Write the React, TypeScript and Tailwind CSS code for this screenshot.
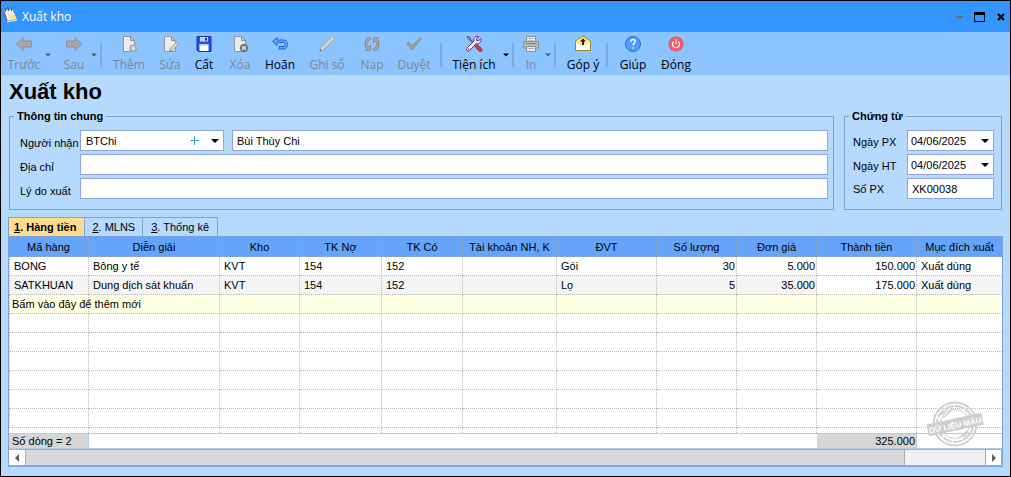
import type { ReactNode } from "react";

/* ---------- icons ---------- */

const Icon = ({ children }: { children: ReactNode }) => (
  <svg width="18" height="18" viewBox="0 0 18 18" fill="none" aria-hidden="true" className="shrink-0">
    {children}
  </svg>
);

const Caret = () => (
  <svg width="8" height="4" viewBox="0 0 8 4" aria-hidden="true" className="shrink-0">
    <path d="M0 0h8L4 4z" fill="#000" />
  </svg>
);

const SmallCaret = () => (
  <svg width="6" height="4" viewBox="0 0 6 4" aria-hidden="true">
    <path d="M0 0.5h6L3 3.5z" fill="currentColor" />
  </svg>
);

const BackIcon = () => (
  <Icon>
    <path d="M1.5 9 8 2.5V6h8.5v6H8v3.5z" fill="#a8a8a8" stroke="#8e8e8e" />
  </Icon>
);

const ForwardIcon = () => (
  <Icon>
    <path d="M16.5 9 10 2.5V6H1.5v6H10v3.5z" fill="#a8a8a8" stroke="#8e8e8e" />
  </Icon>
);

const Sheet = () => (
  <>
    <path d="M3.5 1.5h7l4 4v11h-11z" fill="#ececec" stroke="#8f9499" />
    <path d="M10.5 1.5v4h4z" fill="#c2c6ca" stroke="#8f9499" />
  </>
);

const AddIcon = () => (
  <Icon>
    <Sheet />
    <circle cx="13.2" cy="13.2" r="3" fill="#d9d9d9" stroke="#a6a6a6" strokeWidth="1.6" />
  </Icon>
);

const EditIcon = () => (
  <Icon>
    <Sheet />
    <path d="m8.5 16.5.8-3 6-6.2 2 2-6 6.2z" fill="#d4d4d4" stroke="#959595" strokeWidth=".9" />
    <path d="m8.5 16.5.4-1.8 1.4 1.4z" fill="#777" />
  </Icon>
);

const DeleteIcon = () => (
  <Icon>
    <Sheet />
    <circle cx="13" cy="13" r="4.3" fill="#757575" />
    <path d="m11.2 11.2 3.6 3.6m0-3.6-3.6 3.6" stroke="#e6e6e6" strokeWidth="1.3" />
  </Icon>
);

const SaveIcon = () => (
  <Icon>
    <path d="M2 1.5h14v15H3.5L2 15z" fill="#2450e6" stroke="#1a2fb5" />
    <path d="M5 2h8v4.5H5z" fill="#c9d6f5" />
    <path d="M10 2.8h2v2.7h-2z" fill="#1a2fb5" />
    <path d="M4.5 9.5h9V16h-9z" fill="#fff" />
    <path d="M4.5 9.5h9V11h-9z" fill="#dbe3f4" />
  </Icon>
);

const UndoIcon = () => (
  <Icon>
    <path
      d="M1.5 6.5 6 2.5V5h6.500c2.600 0 4 1.800 4 4.500s-1.600 4.500-4 4.500H8v-2.500h4c1.400 0 2-.8 2-2s-.6-2-2-2H6V10.500z"
      fill="#5aa5fb"
      stroke="#1b66d9"
    />
  </Icon>
);

const PencilIcon = () => (
  <Icon>
    <path d="m1.500 16.500 1.300-4L13.500 2.200c.8-.7 1.800-.6 2.400 0 .6.700.6 1.600 0 2.300L5.200 15z" fill="#d6d6d6" stroke="#a2a2a2" />
    <path d="m1.500 16.500.8-2.600 1.900 1.700z" fill="#777" />
  </Icon>
);

const ReloadIcon = () => (
  <Icon>
    <path d="M7.600 3C3.200 4 1.800 9.500 5 13.200" stroke="#858585" strokeWidth="3.200" />
    <path d="M10.400 15c4.400-1 5.800-6.500 2.600-10.200" stroke="#858585" strokeWidth="3.200" />
    <path d="M2.300 15.500h5.200V10z" fill="#a6a6a6" stroke="#858585" strokeWidth=".8" />
    <path d="M15.700 2.500h-5.200V8z" fill="#a6a6a6" stroke="#858585" strokeWidth=".8" />
    <path d="M7.200 3.200C3.400 4.300 2.200 9.500 5.400 13.200" stroke="#a9a9a9" strokeWidth="1.600" />
    <path d="M10.800 14.800c3.800-1.100 5-6.300 1.800-10" stroke="#a9a9a9" strokeWidth="1.600" />
  </Icon>
);

const CheckIcon = () => (
  <Icon>
    <path d="m1.500 8.500 2-1.500 3.500 3.500L15.500 2.500l1 1L7.500 15z" fill="#9c9c9c" stroke="#8c8c8c" strokeWidth=".8" />
  </Icon>
);

const ToolsIcon = () => (
  <Icon>
    <path d="m2 1.500 3 1.500.6 2.200L11 10.600" stroke="#3f5fae" strokeWidth="1.500" />
    <path d="M2.200 1.800 4.800 3.200 5.400 5 3.200 4.600z" fill="#cfe0ff" stroke="#3f5fae" strokeWidth=".8" />
    <path d="m10 11.300 1.900-1.900 4.400 4c1 1.100.9 2 .2 2.700s-1.700.8-2.700-.2z" fill="#e2383c" stroke="#9c1c2c" strokeWidth=".9" />
    <path
      d="M15.800 3.600 13.400 6l-1.700-.4-.4-1.700 2.400-2.400c-2.300-.7-4.700.5-4.900 3 0 .6 0 1 .2 1.500L2.100 13c-1.600 1.700.6 4.200 2.500 2.500l6.800-7c2.800.9 5.700-1.600 4.400-4.900z"
      fill="#f1ecfa"
      stroke="#6b2c83"
    />
    <circle cx="3.700" cy="14" r=".8" fill="#6b2c83" />
  </Icon>
);

const PrintIcon = () => (
  <Icon>
    <path d="M4.500 6.500v-5h9v5" fill="#ebebeb" stroke="#8d8d8d" />
    <path d="M6 3.500h6M6 5.500h6" stroke="#bcbcbc" />
    <path d="M1.500 6.500h15v6.500h-15z" fill="#b9b9b9" stroke="#8d8d8d" />
    <path d="M3.500 8.500h11" stroke="#838383" />
    <path d="M4.500 11.500h9v5h-9z" fill="#ebebeb" stroke="#8d8d8d" />
    <path d="M6 13.500h6" stroke="#aaa" />
  </Icon>
);

const MailIcon = () => (
  <Icon>
    <path d="M1.500 6 9 1l7.500 5v9.500h-15z" fill="#ffe98a" stroke="#a1842f" />
    <path d="M2 7.500 6.500 10h5L16 7.500V15H2z" fill="#fffef2" />
    <path d="M9 3.200 12 6.500h-2V10H8V6.500H6z" fill="#222" />
  </Icon>
);

const HelpIcon = () => (
  <Icon>
    <circle cx="9" cy="9" r="7.500" fill="#4e9bff" stroke="#2b6fd8" />
    <path d="M6.700 6.900C6.700 5.300 7.700 4.500 9 4.500s2.300.8 2.300 2.100C11.300 8.300 9 8.400 9 10.600M9 12.200v1.500" stroke="#fff" strokeWidth="1.300" />
  </Icon>
);

const PowerIcon = () => (
  <Icon>
    <circle cx="9" cy="9" r="7" fill="#fb5c62" stroke="#d95361" />
    <path d="M6.600 6.600a3.500 3.500 0 1 0 4.800 0M9 4.600v4.400" stroke="#fff" strokeWidth="1.200" />
  </Icon>
);

const AppIcon = () => (
  <svg width="16" height="16" viewBox="0 0 16 16" aria-hidden="true" className="shrink-0">
    <path d="M1 3 10.500 2l4.500 10.500L4.500 15z" fill="#8d86a8" />
    <path d="M2.500 3.500 10.500 2.500l4 9.500L5.500 13.500z" fill="#f4f1f6" />
    <path d="M6.500 7.500 12.500 7l2 5-6.500 1.200z" fill="#f8df8c" />
    <path d="m1.500 3.500 4 10-1.500.7L.8 4.500z" fill="#5d6ba8" />
    <path d="M3.500 1v3.500M6.500.7v3.500M9.500.5v3.500" stroke="#5a4f78" strokeWidth="1" />
    <path d="m4.500 14.300 10.800-1.900.3 1.200L5.500 15.600z" fill="#bfe5ff" />
  </svg>
);

/* ---------- toolbar ---------- */

const ToolButton = ({ label, width, disabled, children }: { label: string; width: string; disabled?: boolean; children: ReactNode }) => (
  <button
    type="button"
    disabled={disabled}
    className={`${width} flex shrink-0 flex-col items-center gap-0.5 whitespace-nowrap text-xs leading-5 ${disabled ? "text-[#7b8795]" : "text-black"}`}
  >
    {children}
    <span>{label}</span>
  </button>
);

const ToolArrow = ({ label, disabled }: { label: string; disabled?: boolean }) => (
  <button
    type="button"
    aria-label={label}
    disabled={disabled}
    className={`flex w-[10px] shrink-0 items-center justify-center ${disabled ? "text-[#4d5a6b]" : "text-black"}`}
  >
    <SmallCaret />
  </button>
);

const Separator = () => <span className="mr-[5px] ml-px h-6 w-[2px] shrink-0 self-center bg-[#78a9e6]" />;

const Toolbar = () => (
  <div role="toolbar" className="flex h-[43px] bg-[#8bc4ff] pt-[3px] pl-1">
    <ToolButton label="Trước" width="w-[38px]" disabled><BackIcon /></ToolButton>
    <ToolArrow label="Danh sách trước" disabled />
    <span className="w-1.5 shrink-0" />
    <ToolButton label="Sau" width="w-[30px]" disabled><ForwardIcon /></ToolButton>
    <ToolArrow label="Danh sách sau" disabled />
    <Separator />
    <ToolButton label="Thêm" width="w-[44px]" disabled><AddIcon /></ToolButton>
    <ToolButton label="Sửa" width="w-[38px]" disabled><EditIcon /></ToolButton>
    <ToolButton label="Cất" width="w-[30px]"><SaveIcon /></ToolButton>
    <ToolButton label="Xóa" width="w-[42px]" disabled><DeleteIcon /></ToolButton>
    <ToolButton label="Hoãn" width="w-[38px]"><UndoIcon /></ToolButton>
    <ToolButton label="Ghi sổ" width="w-[56px]" disabled><PencilIcon /></ToolButton>
    <ToolButton label="Nạp" width="w-[34px]" disabled><ReloadIcon /></ToolButton>
    <ToolButton label="Duyệt" width="w-[50px]" disabled><CheckIcon /></ToolButton>
    <Separator />
    <ToolButton label="Tiện ích" width="w-[54px]"><ToolsIcon /></ToolButton>
    <ToolArrow label="Mở tiện ích" />
    <Separator />
    <ToolButton label="In" width="w-[24px]" disabled><PrintIcon /></ToolButton>
    <ToolArrow label="Chọn mẫu in" disabled />
    <Separator />
    <ToolButton label="Góp ý" width="w-[44px]"><MailIcon /></ToolButton>
    <Separator />
    <ToolButton label="Giúp" width="w-[40px]"><HelpIcon /></ToolButton>
    <ToolButton label="Đóng" width="w-[46px]"><PowerIcon /></ToolButton>
  </div>
);

const TitleBar = () => (
  <header className="flex h-[31px] items-center gap-1 bg-[#3395ff] pr-[5px] pb-1 pl-px text-xs text-white">
    <AppIcon />
    <span className="flex-1 pt-1">Xuất kho</span>
    <div className="flex items-center gap-[10px] pt-1">
      <button type="button" aria-label="Thu nhỏ">
        <svg width="8" height="10" viewBox="0 0 8 10"><path d="M0 4h7v2H0z" fill="#6b6b6b" /></svg>
      </button>
      <button type="button" aria-label="Phóng to">
        <svg width="11" height="10" viewBox="0 0 11 10"><path d="M.5.5h10v9H.5z" fill="none" stroke="#000" /><path d="M0 0h11v3H0z" /></svg>
      </button>
      <button type="button" aria-label="Đóng cửa sổ" className="pl-0.5">
        <svg width="8" height="8" viewBox="0 0 8 8"><path d="m1 1 6 6m0-6L1 7" stroke="#000" strokeWidth="2.200" /></svg>
      </button>
    </div>
  </header>
);

/* ---------- form ---------- */

const box = "h-[21px] w-full min-w-0 border border-[#8ea3e0] bg-white";

const DateField = ({ id, label }: { id: string; label: string }) => (
  <div className="flex items-center">
    <label htmlFor={id} className="w-[54px] shrink-0 pt-0.5">{label}</label>
    <div className={`${box} flex flex-1 items-center pr-1`}>
      <input id={id} type="text" defaultValue="04/06/2025" className="w-full min-w-0 pl-[3px] outline-none" />
      <button type="button" aria-label={`Chọn ${label}`}><Caret /></button>
    </div>
  </div>
);

const Forms = () => (
  <form className="flex gap-[10px]">
    <fieldset className="min-w-0 flex-1 border border-[#7f9fd3] pr-[5px] pb-[10px] pl-[10px]">
      <legend className="-ml-1.5 px-[3px] leading-[14px] font-bold">Thông tin chung</legend>
      <div className="flex flex-col gap-[3px] pt-[7px]">
        <div className="flex items-center">
          <label htmlFor="receiver" className="w-[60px] shrink-0 pt-1">Người nhận</label>
          <div className="flex h-[21px] w-[144px] shrink-0 items-center border border-[#8ea3e0] bg-white pr-1">
            <select id="receiver" className="min-w-0 flex-1 appearance-none pl-[5px] outline-none">
              <option>BTChi</option>
            </select>
            <button type="button" aria-label="Thêm người nhận" className="mr-3">
              <svg width="9" height="9" viewBox="0 0 9 9"><path d="M4.500 0v9M0 4.500h9" stroke="#2e9bea" /></svg>
            </button>
            <Caret />
          </div>
          <input type="text" aria-label="Tên người nhận" defaultValue="Bùi Thùy Chi" className={`${box} ml-2 flex-1 px-1`} />
        </div>
        <div className="flex items-center">
          <label htmlFor="address" className="w-[60px] shrink-0 pt-1">Địa chỉ</label>
          <input id="address" type="text" className={`${box} flex-1 px-1`} />
        </div>
        <div className="flex items-center">
          <label htmlFor="reason" className="w-[60px] shrink-0 pt-1">Lý do xuất</label>
          <input id="reason" type="text" className={`${box} flex-1 px-1`} />
        </div>
      </div>
    </fieldset>
    <fieldset className="w-[158px] min-w-0 shrink-0 border border-[#7f9fd3] pr-[7px] pb-[10px] pl-2">
      <legend className="-ml-1 px-[3px] leading-[14px] font-bold">Chứng từ</legend>
      <div className="flex flex-col gap-[3px] pt-[7px]">
        <DateField id="px-date" label="Ngày PX" />
        <DateField id="ht-date" label="Ngày HT" />
        <div className="flex items-center">
          <label htmlFor="px-no" className="w-[54px] shrink-0">Số PX</label>
          <input id="px-no" type="text" defaultValue="XK00038" className={`${box} flex-1 px-1`} />
        </div>
      </div>
    </fieldset>
  </form>
);

/* ---------- grid ---------- */

const tabs = [
  { key: "1", text: "Hàng tiền", active: true },
  { key: "2", text: "MLNS", active: false },
  { key: "3", text: "Thống kê", active: false },
];

const Tabs = () => (
  <div role="tablist" className="flex">
    {tabs.map((t, i) => (
      <button
        key={t.key}
        type="button"
        role="tab"
        aria-selected={t.active}
        className={`flex h-[19px] items-center border-t border-r border-[#7ba2d6] whitespace-pre ${i === 0 ? "border-l pr-2 pl-[5px]" : i === 1 ? "px-[7px]" : "px-2"} ${t.active ? "bg-[#ffdc8e] font-bold" : "bg-[#b6dafe]"}`}
      >
        <u>{t.key}</u>. {t.text}
      </button>
    ))}
  </div>
);

const columns = [
  { title: "Mã hàng", col: "w-[80px]" },
  { title: "Diễn giải", col: "w-[131px]" },
  { title: "Kho", col: "w-[80px]" },
  { title: "TK Nợ", col: "w-[82px]" },
  { title: "TK Có", col: "w-[81px]" },
  { title: "Tài khoản NH, K", col: "w-[94px]" },
  { title: "ĐVT", col: "w-[100px]" },
  { title: "Số lượng", col: "w-[80px]", right: true },
  { title: "Đơn giá", col: "w-[80px]", right: true },
  { title: "Thành tiền", col: "w-[100px]", right: true },
  { title: "Mục đích xuất", col: "" },
];

const rows = [
  { bg: "bg-white", cells: ["BONG", "Bông y tế", "KVT", "154", "152", "", "Gói", "30", "5.000", "150.000", "Xuất dùng"] },
  { bg: "bg-[#f4f4f4]", cells: ["SATKHUAN", "Dung dịch sát khuẩn", "KVT", "154", "152", "", "Lọ", "5", "35.000", "175.000", "Xuất dùng"] },
  { bg: "bg-[#ffffe1]", cells: ["Bấm vào đây để thêm mới"] },
  ...Array.from({ length: 6 }, () => ({ bg: "bg-white", cells: [] as string[] })),
];

const Stamp = () => (
  <svg width="60" height="48" viewBox="0 0 60 48" aria-hidden="true" className="absolute right-[16px] bottom-[18px]">
    <g fill="none" stroke="#cfcfcf">
      <circle cx="29" cy="24" r="21.500" strokeWidth="1.800" />
      <circle cx="29" cy="24" r="18" strokeWidth="2" strokeDasharray="9 1.500" />
      <circle cx="29" cy="24" r="14.500" strokeWidth="1" />
      <path d="M15 15 22 9M17 18l10-9M33 38l9-8M37 38l6-6" strokeWidth="1.500" />
    </g>
    <g transform="rotate(-12 29 24)">
      <path d="M1 18.500h56v12H1z" fill="#cdcdcd" />
      <text x="29" y="28" textAnchor="middle" fontSize="8" fontWeight="700" fill="#fff">DỮ LIỆU MẪU</text>
    </g>
  </svg>
);

const Grid = () => (
  <div className="relative border border-[#7ba2d6] bg-white">
    <table className="w-full table-fixed border-separate border-spacing-0">
      <colgroup>
        {columns.map((c) => <col key={c.title} className={c.col} />)}
      </colgroup>
      <thead>
        <tr className="h-5 bg-[#64a4fa]">
          {columns.map((c) => (
            <th key={c.title} className="overflow-hidden border-r border-b border-[#84a4cc] p-0 font-normal whitespace-nowrap last:border-r-0">
              {c.title}
            </th>
          ))}
        </tr>
      </thead>
      <tbody>
        {rows.map((r, ri) => (
          <tr key={ri} className={`h-[19px] ${r.bg}`}>
            {columns.map((c, ci) => (
              <td
                key={c.title}
                className={`border-r border-b border-dotted border-[#b9b9b9] py-0 whitespace-nowrap last:border-r-0 ${c.right ? "pr-px text-right" : ri === 2 ? "pl-[2px]" : "pl-1"} ${ci === 0 ? "border-l" : ""} ${ri === 1 && ci === 9 ? "bg-white" : ""}`}
              >
                {r.cells[ci]}
              </td>
            ))}
          </tr>
        ))}
        <tr className="h-[5px]">
          {columns.map((c) => <td key={c.title} className="border-r border-dotted border-[#b9b9b9] p-0 last:border-r-0" />)}
        </tr>
      </tbody>
      <tfoot>
        <tr className="h-4 leading-[14px]">
          <td className="border-y border-r border-[#b4cbe6] bg-[#d6d6d6] py-0 pl-[3px]">Số dòng = 2</td>
          <td colSpan={8} className="border-y border-[#b4cbe6] p-0" />
          <td className="border-y border-r border-[#b4cbe6] bg-[#d6d6d6] py-0 pr-px text-right">325.000</td>
          <td className="border-y border-[#b4cbe6] p-0" />
        </tr>
      </tfoot>
    </table>
    <div className="flex h-[17px] border-y border-[#ababab] bg-[#f0f0f0]">
      <button type="button" aria-label="Cuộn trái" className="flex w-4 items-center justify-center bg-white">
        <svg width="4" height="8" viewBox="0 0 4 8"><path d="M4 0v8L0 4z" fill="#606060" /></svg>
      </button>
      <div className="flex-1">
        <div className="h-full w-11/12 border-x border-[#ababab] bg-[#d8d8d8]" />
      </div>
      <button type="button" aria-label="Cuộn phải" className="flex w-[17px] items-center justify-center border-x border-[#ababab] bg-white">
        <svg width="4" height="8" viewBox="0 0 4 8"><path d="M0 0v8l4-4z" fill="#606060" /></svg>
      </button>
    </div>
    <Stamp />
  </div>
);

export default function App() {
  return (
    <div className="border border-black bg-[#b6dafe] font-['Liberation_Sans',Arial,sans-serif] text-[11px] leading-[14px] text-black">
      <div className="font-['Open_Sans','Noto_Sans',sans-serif]">
        <TitleBar />
        <Toolbar />
      </div>
      <main className="pb-[9px]">
        <div className="px-2">
          <h1 className="pt-px pb-px text-[22px] leading-8 font-bold">Xuất kho</h1>
          <Forms />
        </div>
        <div className="px-[7px] pt-[7px]">
          <Tabs />
          <Grid />
        </div>
      </main>
    </div>
  );
}
